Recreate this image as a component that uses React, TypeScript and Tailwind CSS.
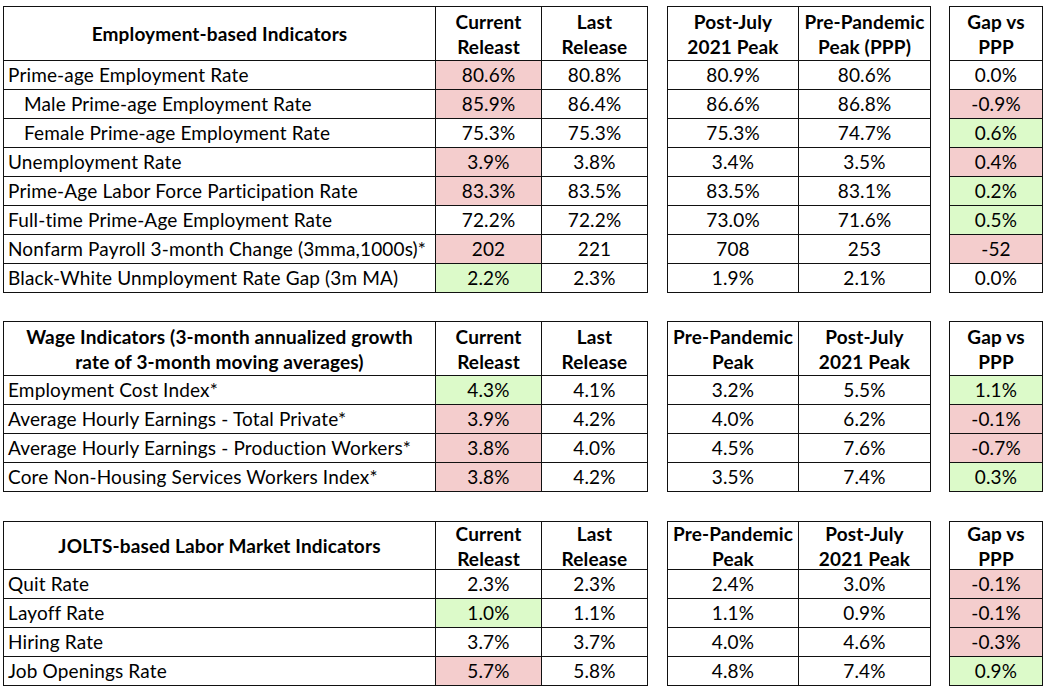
import React from 'react';

type Fill = 'red' | 'green' | undefined;

interface Row {
  label: string;
  indent?: boolean;
  cur: string;
  curFill?: Fill;
  last: string;
  b1: string;
  b2: string;
  gap: string;
  gapFill?: Fill;
}

interface Section {
  title: string;
  headA: string[];
  headB: [string, string];
  headerH: string;
  mt: string;
  rows: Row[];
}

const fillClass = (f: Fill) =>
  f === 'red' ? 'bg-[#f4cdcd]' : f === 'green' ? 'bg-[#dcfac9]' : 'bg-white';

const sections: Section[] = [
  {
    title: 'Employment-based Indicators',
    headA: ['Employment-based Indicators'],
    headB: ['Post-July 2021 Peak', 'Pre-Pandemic Peak (PPP)'],
    headerH: 'h-[54px]',
    mt: 'mt-0',
    rows: [
      { label: 'Prime-age Employment Rate', cur: '80.6%', curFill: 'red', last: '80.8%', b1: '80.9%', b2: '80.6%', gap: '0.0%' },
      { label: 'Male Prime-age Employment Rate', indent: true, cur: '85.9%', curFill: 'red', last: '86.4%', b1: '86.6%', b2: '86.8%', gap: '-0.9%', gapFill: 'red' },
      { label: 'Female Prime-age Employment Rate', indent: true, cur: '75.3%', last: '75.3%', b1: '75.3%', b2: '74.7%', gap: '0.6%', gapFill: 'green' },
      { label: 'Unemployment Rate', cur: '3.9%', curFill: 'red', last: '3.8%', b1: '3.4%', b2: '3.5%', gap: '0.4%', gapFill: 'red' },
      { label: 'Prime-Age Labor Force Participation Rate', cur: '83.3%', curFill: 'red', last: '83.5%', b1: '83.5%', b2: '83.1%', gap: '0.2%', gapFill: 'green' },
      { label: 'Full-time Prime-Age Employment Rate', cur: '72.2%', last: '72.2%', b1: '73.0%', b2: '71.6%', gap: '0.5%', gapFill: 'green' },
      { label: 'Nonfarm Payroll 3-month Change (3mma,1000s)*', cur: '202', curFill: 'red', last: '221', b1: '708', b2: '253', gap: '-52', gapFill: 'red' },
      { label: 'Black-White Unmployment Rate Gap (3m MA)', cur: '2.2%', curFill: 'green', last: '2.3%', b1: '1.9%', b2: '2.1%', gap: '0.0%' },
    ],
  },
  {
    title: 'Wage Indicators',
    headA: ['Wage Indicators (3-month annualized growth', 'rate of 3-month moving averages)'],
    headB: ['Pre-Pandemic Peak', 'Post-July 2021 Peak'],
    headerH: 'h-[54px]',
    mt: 'mt-[28px]',
    rows: [
      { label: 'Employment Cost Index*', cur: '4.3%', curFill: 'green', last: '4.1%', b1: '3.2%', b2: '5.5%', gap: '1.1%', gapFill: 'green' },
      { label: 'Average Hourly Earnings - Total Private*', cur: '3.9%', curFill: 'red', last: '4.2%', b1: '4.0%', b2: '6.2%', gap: '-0.1%', gapFill: 'red' },
      { label: 'Average Hourly Earnings - Production Workers*', cur: '3.8%', curFill: 'red', last: '4.0%', b1: '4.5%', b2: '7.6%', gap: '-0.7%', gapFill: 'red' },
      { label: 'Core Non-Housing Services Workers Index*', cur: '3.8%', curFill: 'red', last: '4.2%', b1: '3.5%', b2: '7.4%', gap: '0.3%', gapFill: 'green' },
    ],
  },
  {
    title: 'JOLTS',
    headA: ['JOLTS-based Labor Market Indicators'],
    headB: ['Pre-Pandemic Peak', 'Post-July 2021 Peak'],
    headerH: 'h-[48px]',
    mt: 'mt-[29px]',
    rows: [
      { label: 'Quit Rate', cur: '2.3%', last: '2.3%', b1: '2.4%', b2: '3.0%', gap: '-0.1%', gapFill: 'red' },
      { label: 'Layoff Rate', cur: '1.0%', curFill: 'green', last: '1.1%', b1: '1.1%', b2: '0.9%', gap: '-0.1%', gapFill: 'red' },
      { label: 'Hiring Rate', cur: '3.7%', last: '3.7%', b1: '4.0%', b2: '4.6%', gap: '-0.3%', gapFill: 'red' },
      { label: 'Job Openings Rate', cur: '5.7%', curFill: 'red', last: '5.8%', b1: '4.8%', b2: '7.4%', gap: '0.9%', gapFill: 'green' },
    ],
  },
];

const cell = 'border-r border-b border-[#111] flex items-center';
const head = `${cell} justify-center text-center font-bold leading-[25px]`;
const num = `${cell} justify-center h-[29px]`;

const TwoLine = ({ text }: { text: string }) => {
  // split header into two lines like the sheet does
  const map: Record<string, string[]> = {
    'Current Releast': ['Current', 'Releast'],
    'Last Release': ['Last', 'Release'],
    'Post-July 2021 Peak': ['Post-July', '2021 Peak'],
    'Pre-Pandemic Peak (PPP)': ['Pre-Pandemic', 'Peak (PPP)'],
    'Pre-Pandemic Peak': ['Pre-Pandemic', 'Peak'],
    'Gap vs PPP': ['Gap vs', 'PPP'],
  };
  const lines = map[text] ?? [text];
  return (
    <div>
      {lines.map((l) => (
        <div key={l}>{l}</div>
      ))}
    </div>
  );
};

const SectionBlock = ({ s }: { s: Section }) => (
  <div className={`flex items-start ${s.mt}`}>
    {/* main table */}
    <div className="border-l border-t border-[#111] flex flex-col">
      <div className="flex">
        <div className={`${head} ${s.headerH} w-[432px] whitespace-nowrap`}>
          <div>
            {s.headA.map((l) => (
              <div key={l}>{l}</div>
            ))}
          </div>
        </div>
        <div className={`${head} ${s.headerH} w-[106px]`}>
          <TwoLine text="Current Releast" />
        </div>
        <div className={`${head} ${s.headerH} w-[106px]`}>
          <TwoLine text="Last Release" />
        </div>
      </div>
      {s.rows.map((r) => (
        <div key={r.label} className="flex">
          <div className={`${cell} h-[29px] w-[432px] whitespace-nowrap ${r.indent ? 'pl-[20px]' : 'pl-[4px]'}`}>{r.label}</div>
          <div className={`${num} w-[106px] ${fillClass(r.curFill)}`}>{r.cur}</div>
          <div className={`${num} w-[106px]`}>{r.last}</div>
        </div>
      ))}
    </div>

    {/* peaks table */}
    <div className="ml-[19px] border-l border-t border-[#111] flex flex-col">
      <div className="flex">
        <div className={`${head} ${s.headerH} w-[131px] whitespace-nowrap`}>
          <TwoLine text={s.headB[0]} />
        </div>
        <div className={`${head} ${s.headerH} w-[132px] whitespace-nowrap`}>
          <TwoLine text={s.headB[1]} />
        </div>
      </div>
      {s.rows.map((r) => (
        <div key={r.label} className="flex">
          <div className={`${num} w-[131px]`}>{r.b1}</div>
          <div className={`${num} w-[132px]`}>{r.b2}</div>
        </div>
      ))}
    </div>

    {/* gap table */}
    <div className="ml-[18px] border-l border-t border-[#111] flex flex-col">
      <div className={`${head} ${s.headerH} w-[93px]`}>
        <TwoLine text="Gap vs PPP" />
      </div>
      {s.rows.map((r) => (
        <div key={r.label} className={`${num} w-[93px] ${fillClass(r.gapFill)}`}>
          {r.gap}
        </div>
      ))}
    </div>
  </div>
);

export default function App() {
  return (
    <div className="w-[1047px] h-[694px] bg-white pt-[6px] pl-[3px] text-black text-[19px] tracking-[0.15px] font-['Lato',sans-serif] overflow-hidden">
      {sections.map((s) => (
        <SectionBlock key={s.title} s={s} />
      ))}
    </div>
  );
}
